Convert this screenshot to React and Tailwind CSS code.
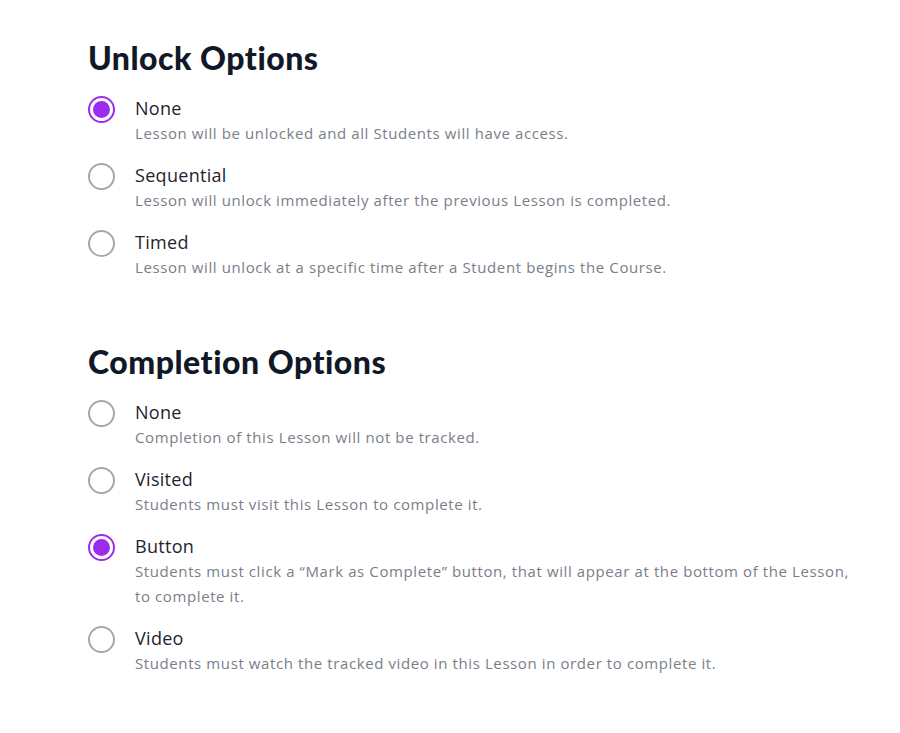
import { useState } from "react";

const unlockOptions = [
  { id: "none", label: "None", desc: "Lesson will be unlocked and all Students will have access." },
  { id: "sequential", label: "Sequential", desc: "Lesson will unlock immediately after the previous Lesson is completed." },
  { id: "timed", label: "Timed", desc: "Lesson will unlock at a specific time after a Student begins the Course." },
];

const completionOptions = [
  { id: "none", label: "None", desc: "Completion of this Lesson will not be tracked." },
  { id: "visited", label: "Visited", desc: "Students must visit this Lesson to complete it." },
  {
    id: "button",
    label: "Button",
    desc: "Students must click a \u201cMark as Complete\u201d button, that will appear at the bottom of the Lesson, to complete it.",
  },
  { id: "video", label: "Video", desc: "Students must watch the tracked video in this Lesson in order to complete it." },
];

function Radio({ checked }) {
  return (
    <span
      className={
        checked
          ? "mt-[1px] flex h-[27px] w-[27px] shrink-0 items-center justify-center rounded-full border-2 border-[#9b2cee]"
          : "mt-[1px] flex h-[27px] w-[27px] shrink-0 items-center justify-center rounded-full border-2 border-[#a3a7b0]"
      }
    >
      {checked && <span className="h-[17px] w-[17px] rounded-full bg-[#9b2cee]" />}
    </span>
  );
}

function OptionGroup({ title, options, value, onChange, className }) {
  return (
    <section className={className}>
      <h2
        className="text-[32px] font-black leading-[40px] tracking-[0.5px] text-[#111827]"
        style={{ fontFamily: "Lato, sans-serif" }}
      >
        {title}
      </h2>
      <div className="mt-[17px] flex flex-col gap-[16px]">
        {options.map((opt) => (
          <label key={opt.id} className="flex cursor-pointer items-start gap-[20px]" onClick={() => onChange(opt.id)}>
            <Radio checked={value === opt.id} />
            <div className="max-w-[716px]">
              <div className="text-[18px] leading-[26px] tracking-[0.3px] text-[#1f2430]">{opt.label}</div>
              <div className="text-[15px] leading-[25px] tracking-[0.6px] text-[#7a7e89]">{opt.desc}</div>
            </div>
          </label>
        ))}
      </div>
    </section>
  );
}

export default function App() {
  const [unlock, setUnlock] = useState("none");
  const [completion, setCompletion] = useState("button");

  return (
    <div
      className="min-h-screen bg-white pl-[88px] pt-[38px]"
      style={{ fontFamily: "'Open Sans', 'Noto Sans', sans-serif" }}
    >
      <OptionGroup title="Unlock Options" options={unlockOptions} value={unlock} onChange={setUnlock} />
      <OptionGroup
        title="Completion Options"
        options={completionOptions}
        value={completion}
        onChange={setCompletion}
        className="mt-[62px]"
      />
    </div>
  );
}
